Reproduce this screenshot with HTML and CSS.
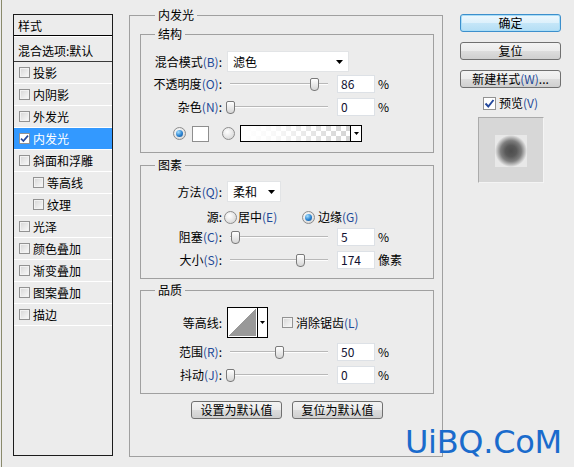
FILE: index.html
```html
<!DOCTYPE html>
<html lang="zh-CN">
<head>
<meta charset="utf-8">
<title>图层样式</title>
<link rel="stylesheet" href="styles.css">
</head>
<body>
<div class="dialog">
  <div class="styles-panel">
    <div class="sp-head">样式</div>
    <div class="sp-blend">混合选项:默认</div>
    <div class="sp-row"><span class="cb"></span>投影</div>
    <div class="sp-row"><span class="cb"></span>内阴影</div>
    <div class="sp-row"><span class="cb"></span>外发光</div>
    <div class="sp-row sel"><span class="cb on"><svg width="9" height="9" viewBox="0 0 9 9"><path d="M1 4.6 L3.4 7 L8 1.6" fill="none" stroke="#24489c" stroke-width="1.7"/></svg></span>内发光</div>
    <div class="sp-row"><span class="cb"></span>斜面和浮雕</div>
    <div class="sp-row sub"><span class="cb"></span>等高线</div>
    <div class="sp-row sub"><span class="cb"></span>纹理</div>
    <div class="sp-row"><span class="cb"></span>光泽</div>
    <div class="sp-row"><span class="cb"></span>颜色叠加</div>
    <div class="sp-row"><span class="cb"></span>渐变叠加</div>
    <div class="sp-row"><span class="cb"></span>图案叠加</div>
    <div class="sp-row"><span class="cb"></span>描边</div>
  </div>

  <div class="group main">
    <div class="gtitle">内发光</div>

    <div class="group subgroup g-struct">
      <div class="gtitle">结构</div>
      <div class="row r-select">
        <span class="lbl">混合模式<span class="key">(B)</span>:</span>
        <div class="select sel-blend"><span>滤色</span><svg class="arrow" width="7" height="4" viewBox="0 0 7 4"><path d="M0 0H7L3.5 4Z" fill="#000"/></svg></div>
      </div>
      <div class="row r-field r-first">
        <span class="lbl">不透明度<span class="key">(O)</span>:</span>
        <div class="slider"><div class="track"></div><div class="thumb" style="left:86%"></div></div>
        <div class="num">86</div><span class="unit">%</span>
      </div>
      <div class="row r-field">
        <span class="lbl">杂色<span class="key">(N)</span>:</span>
        <div class="slider"><div class="track"></div><div class="thumb" style="left:0%"></div></div>
        <div class="num">0</div><span class="unit">%</span>
      </div>
      <div class="row r-color">
        <span class="radio on"></span>
        <span class="swatch"></span>
        <span class="radio r2"></span>
        <div class="gradient"><div class="grad"></div><div class="gsep"><svg width="5" height="3" viewBox="0 0 5 3"><path d="M0 0H5L2.5 3Z" fill="#000"/></svg></div></div>
      </div>
    </div>

    <div class="group subgroup g-elem">
      <div class="gtitle">图素</div>
      <div class="row r-select r-method">
        <span class="lbl">方法<span class="key">(Q)</span>:</span>
        <div class="select sel-method"><span>柔和</span><svg class="arrow" width="7" height="4" viewBox="0 0 7 4"><path d="M0 0H7L3.5 4Z" fill="#000"/></svg></div>
      </div>
      <div class="row r-source">
        <span class="lbl">源:</span>
        <span class="ropt o1"><span class="radio"></span><span class="otext">居中<span class="key">(E)</span></span></span>
        <span class="ropt o2"><span class="radio on"></span><span class="otext t2">边缘<span class="key">(G)</span></span></span>
      </div>
      <div class="row r-field r-first">
        <span class="lbl">阻塞<span class="key">(C)</span>:</span>
        <div class="slider"><div class="track"></div><div class="thumb" style="left:5%"></div></div>
        <div class="num">5</div><span class="unit">%</span>
      </div>
      <div class="row r-field">
        <span class="lbl">大小<span class="key">(S)</span>:</span>
        <div class="slider"><div class="track"></div><div class="thumb" style="left:71%"></div></div>
        <div class="num">174</div><span class="unit">像素</span>
      </div>
    </div>

    <div class="group subgroup g-quality">
      <div class="gtitle">品质</div>
      <div class="row r-contour">
        <span class="lbl">等高线:</span>
        <div class="contour"><div class="cshape"></div><div class="csep"><svg width="5" height="3" viewBox="0 0 5 3"><path d="M0 0H5L2.5 3Z" fill="#000"/></svg></div></div>
        <span class="cb aa"></span><span class="aatext">消除锯齿<span class="key">(L)</span></span>
      </div>
      <div class="row r-field">
        <span class="lbl">范围<span class="key">(R)</span>:</span>
        <div class="slider"><div class="track"></div><div class="thumb" style="left:50%"></div></div>
        <div class="num">50</div><span class="unit">%</span>
      </div>
      <div class="row r-field">
        <span class="lbl">抖动<span class="key">(J)</span>:</span>
        <div class="slider"><div class="track"></div><div class="thumb" style="left:0%"></div></div>
        <div class="num">0</div><span class="unit">%</span>
      </div>
    </div>

    <div class="defaults">
      <div class="btn wide">设置为默认值</div>
      <div class="btn wide">复位为默认值</div>
    </div>
  </div>

  <div class="side">
    <div class="btn side-btn default">确定</div>
    <div class="btn side-btn">复位</div>
    <div class="btn side-btn">新建样式<span class="key">(W)</span>...</div>
    <div class="preview-check"><span class="cb big on"><svg width="11" height="11" viewBox="0 0 11 11"><path d="M1.5 5.5 L4.3 8.5 L9.5 2" fill="none" stroke="#24489c" stroke-width="1.9"/></svg></span><span class="ptext">预览<span class="key">(V)</span></span></div>
    <div class="preview"><div class="preview-inner"></div></div>
  </div>
</div>
<div class="watermark">UiBQ.CoM</div>
</body>
</html>
```

FILE: styles.css
```css
* { box-sizing: border-box; }
html, body { margin: 0; padding: 0; }
body {
  width: 574px;
  height: 467px;
  overflow: hidden;
  background: #ececec;
  font-family: "Noto Sans CJK SC", "Noto Sans", sans-serif;
  font-size: 12px;
  color: #000;
  position: relative;
}
.dialog {
  display: flex;
  align-items: flex-start;
  height: 467px;
  margin-left: 1px;
  border-left: 1px solid #8a8a6c;
}

/* left style list */
.styles-panel {
  margin: 14px 0 0 11px;
  width: 100px;
  height: 442px;
  border: 1px solid #1c1c1c;
  background: #ececec;
  flex: none;
}
.sp-head {
  height: 21px;
  padding: 1px 0 0 4px;
  line-height: 19px;
  border-bottom: 1px solid #000;
}
.sp-blend {
  height: 26px;
  padding: 3px 0 0 4px;
  line-height: 22px;
  border-top: 1px solid #fff;
  border-bottom: 1px solid #3a3a3a;
}
.sp-row {
  height: 22px;
  display: flex;
  align-items: center;
  padding-left: 5px;
  line-height: 14px;
  border-bottom: 1px solid #fff;
}
.sp-row.sub { padding-left: 19px; }
.sp-row.sel { background: #3399ff; color: #fff; }

.cb {
  width: 11px;
  height: 11px;
  flex: none;
  margin-right: 3px;
  border: 1px solid #929292;
  background: linear-gradient(135deg, #d6d6d6, #fafafa);
  box-shadow: inset 0 0 0 1px #f2f2f2;
  display: flex;
  align-items: center;
  justify-content: center;
}
.cb.on { background: #fff; box-shadow: none; }
.cb.big { width: 13px; height: 13px; }

/* group boxes */
.group {
  border: 1px solid #a0a0a0;
}
.gtitle {
  margin: -8px 0 0 15px;
  padding: 0 3px;
  width: max-content;
  height: 14px;
  line-height: 14px;
  background: #ececec;
}
.main {
  margin: 15px 0 0 16px;
  width: 314px;
  height: 442px;
  padding: 0 8px 0 10px;
  flex: none;
}
.subgroup .gtitle { margin-left: 14px; }
.g-struct { margin-top: 12px; height: 119px; }
.g-elem { margin-top: 12px; height: 114px; }
.g-quality { margin-top: 11px; height: 104px; }

.row {
  display: flex;
  align-items: center;
  line-height: 14px;
}
.lbl {
  width: 81px;
  flex: none;
  text-align: right;
  white-space: nowrap;
}
.key { color: #1e4a98; }

.r-select { margin-top: 10px; height: 21px; }
.r-method { margin-top: 9px; }
.r-field { margin-top: 5px; height: 18px; }
.g-struct .r-first { margin-top: 3px; }
.g-elem .r-first { margin-top: 3px; }
.g-quality .r-field { margin-top: 5px; }

.select {
  margin-left: 5px;
  height: 21px;
  background: #fff;
  border: 1px solid #e2e4e6;
  display: flex;
  align-items: center;
  justify-content: space-between;
  padding: 0 5px 0 5px;
  flex: none;
}
.sel-blend { width: 122px; }
.sel-method { width: 54px; }

.slider {
  margin-left: 8px;
  width: 98px;
  height: 13px;
  position: relative;
  flex: none;
}
.track {
  position: absolute;
  left: 0;
  right: 0;
  top: 5px;
  height: 2px;
  background: linear-gradient(#b8b8b8 50%, #fdfdfd 50%);
}
.thumb {
  position: absolute;
  top: 0;
  width: 9px;
  height: 13px;
  margin-left: -4px;
  border: 1px solid #7a7a7a;
  border-radius: 2px 2px 4px 4px;
  background: linear-gradient(#ffffff, #d6d6d6);
}
.num {
  margin-left: 9px;
  width: 38px;
  height: 18px;
  background: #fff;
  border: 1px solid #dde1e6;
  padding-left: 3px;
  line-height: 16px;
  color: #101030;
  flex: none;
}
.unit { margin-left: 3px; }

/* color row */
.r-color {
  margin-top: 9px;
  height: 17px;
  padding-left: 32px;
}
.radio {
  width: 13px;
  height: 13px;
  flex: none;
  border-radius: 50%;
  border: 1px solid #8c8c8c;
  background: radial-gradient(circle at 40% 35%, #ffffff, #cfcfcf);
  display: flex;
  align-items: center;
  justify-content: center;
}
.radio.on::after {
  content: "";
  width: 7px;
  height: 7px;
  border-radius: 50%;
  background: radial-gradient(circle at 35% 30%, #a6e0ff, #2a82d0 55%, #0c4a8c);
}
.swatch {
  margin-left: 6px;
  width: 17px;
  height: 16px;
  border: 1px solid #8e8e8e;
  background: #fff;
  flex: none;
}
.radio.r2 { margin-left: 13px; }
.gradient {
  margin-left: 5px;
  width: 122px;
  height: 17px;
  border: 1px solid #000;
  display: flex;
  flex: none;
}
.grad {
  flex: 1;
  background-image:
    linear-gradient(to right, #fff 0%, rgba(255,255,255,0.85) 30%, rgba(255,255,255,0) 100%),
    repeating-conic-gradient(#d4d4d4 0 25%, #fff 0 50%);
  background-size: 100% 100%, 10px 10px;
}
.gsep {
  width: 11px;
  border-left: 1px solid #000;
  background: #fff;
  display: flex;
  align-items: center;
  justify-content: center;
}

/* source row */
.r-source { margin-top: 7px; height: 16px; }
.ropt { display: flex; align-items: center; flex: none; }
.ropt.o1 { margin-left: 2px; width: 78px; }
.otext { margin-left: 1px; }
.otext.t2 { margin-left: 3px; }

/* contour row */
.r-contour { margin-top: 10px; height: 31px; }
.contour {
  margin-left: 5px;
  width: 41px;
  height: 31px;
  border: 1px solid #000;
  display: flex;
  flex: none;
}
.cshape {
  flex: 1;
  border: 1px solid #fff;
  background: linear-gradient(to bottom right, #fff 50%, #999 50%);
}
.csep {
  width: 10px;
  border-left: 1px solid #000;
  background: #fff;
  display: flex;
  align-items: center;
  justify-content: center;
}
.cb.aa { margin-left: 14px; margin-right: 3px; }

/* bottom buttons */
.defaults {
  margin-top: 7px;
  display: flex;
  justify-content: center;
  gap: 10px;
}
.btn {
  height: 18px;
  border: 1px solid #707070;
  border-radius: 3px;
  background: linear-gradient(#f3f3f3 0%, #ebebeb 50%, #dddddd 51%, #cfcfcf 100%);
  display: flex;
  align-items: center;
  justify-content: center;
  line-height: 14px;
  white-space: nowrap;
}
.btn.wide { width: 91px; }

/* right side */
.side {
  margin: 14px 0 0 17px;
  width: 101px;
  display: flex;
  flex-direction: column;
  align-items: center;
  flex: none;
}
.side-btn { width: 101px; margin-top: 10px; }
.side-btn:first-child { margin-top: 0; }
.btn.default {
  border-color: #3c8fcc;
  box-shadow: inset 0 0 0 1px #a9ddf7;
  background: linear-gradient(#eef8fe 0%, #dcf0fb 50%, #c5e6f8 51%, #b4def5 100%);
}
.preview-check {
  margin-top: 8px;
  height: 14px;
  display: flex;
  align-items: center;
  line-height: 14px;
}
.preview-check .cb { margin-right: 3px; }
.preview {
  margin-top: 7px;
  width: 66px;
  height: 66px;
  background: #d7d7d7;
  border: 1px solid;
  border-color: #ababab #f4f4f4 #f4f4f4 #ababab;
  display: flex;
  align-items: center;
  justify-content: center;
}
.preview-inner {
  width: 32px;
  height: 32px;
  margin-top: 2px;
  background: radial-gradient(closest-side, #4c4c4c 0%, #595959 35%, #7e7e7e 65%, #c4c4c4 88%, #e8e8e8 100%);
  background-color: #e8e8e8;
}

/* watermark overlay */
.watermark {
  position: absolute;
  left: 405px;
  top: 426px;
  font-family: "DejaVu Sans", sans-serif;
  font-size: 32px;
  line-height: 32px;
  color: #1a6bcc;
  letter-spacing: -0.3px;
}
```
